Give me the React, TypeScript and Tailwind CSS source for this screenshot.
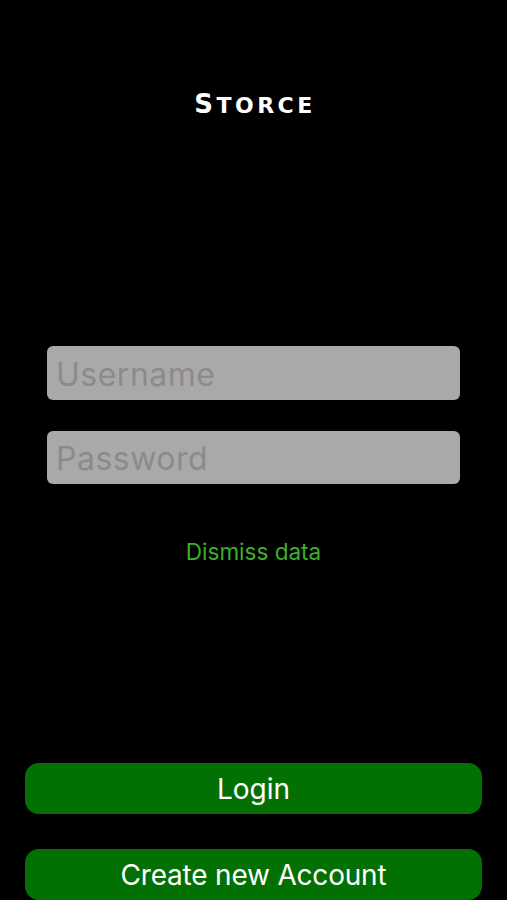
export default function App() {
  return (
    <div className="w-[507px] h-[900px] bg-black overflow-hidden flex flex-col" style={{ fontFamily: "Inter, 'Liberation Sans', sans-serif" }}>
      <div className="h-[84px]" />
      <div className="flex justify-center">
        <div className="text-white leading-[40px] tracking-[3.5px] font-bold flex items-baseline pl-[3px]" style={{ fontFamily: "'DejaVu Sans', sans-serif" }}>
          <span className="text-[26px]">S</span>
          <span className="text-[22px]">TORCE</span>
        </div>
      </div>
      <div className="h-[221px]" />
      <div className="px-[47px] flex flex-col gap-[31px]">
        <div className="h-[54px] rounded-[6px] bg-[#a9a9a9] flex items-center px-[9px] pt-[3px]">
          <span className="text-[#8b8b8b] text-[32px] tracking-[0.5px]">Username</span>
        </div>
        <div className="h-[53px] rounded-[6px] bg-[#a9a9a9] flex items-center px-[9px] pt-[2px]">
          <span className="text-[#8b8b8b] text-[32px] tracking-[0.5px]">Password</span>
        </div>
      </div>
      <div className="h-[53px]" />
      <div className="flex justify-center">
        <span className="text-[#3fae2c] text-[22.5px] leading-[30px]">Dismiss data</span>
      </div>
      <div className="h-[196px]" />
      <div className="px-[25px] flex flex-col gap-[35px]">
        <div className="h-[51px] rounded-[14px] bg-[#037003] flex items-center justify-center pt-[2px]">
          <span className="text-white text-[28px]">Login</span>
        </div>
        <div className="h-[51px] rounded-[14px] bg-[#037003] flex items-center justify-center pt-[2px]">
          <span className="text-white text-[28px] tracking-[-0.2px]">Create new Account</span>
        </div>
      </div>
    </div>
  );
}
